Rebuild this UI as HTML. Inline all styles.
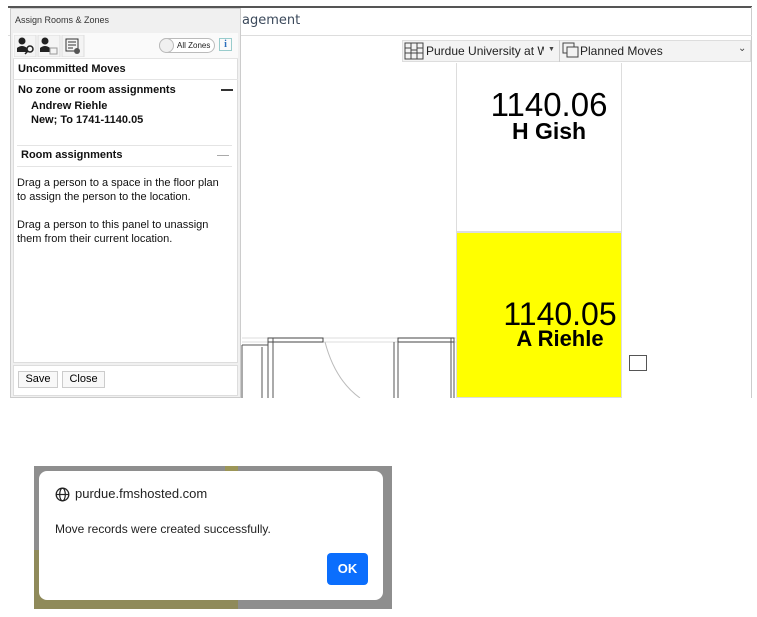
<!DOCTYPE html>
<html><head><style>
body{margin:0;width:757px;height:617px;background:#fff;position:relative;font-family:"Liberation Sans",sans-serif;overflow:hidden}
.a{position:absolute}
</style></head><body>
<div class="a" style="left:8px;top:6px;width:744px;height:2px;background:#555"></div>
<div class="a" style="left:751px;top:7px;width:1px;height:391px;background:#ccc"></div>
<div class="a" style="left:8px;top:35px;width:744px;height:1px;background:#ddd"></div>
<div class="a" style="left:242px;top:13px;font-size:13px;color:#3c4a5c;font-family:'DejaVu Sans',sans-serif">agement</div>
<div class="a" style="left:402px;top:40px;width:349px;height:22px;background:#f3f3f3;border:1px solid #ddd;box-sizing:border-box"></div>
<svg class="a" style="left:404px;top:42px" width="20" height="18"><rect x="1" y="1" width="18" height="16" fill="none" stroke="#444"/><path d="M7 1v16M13 1v16M1 6h6M13 6h6M1 11h18M7 8h6" stroke="#444" fill="none"/></svg>
<div class="a" style="left:426px;top:44px;font-size:12px;color:#222;width:118px;overflow:hidden;white-space:nowrap">Purdue University at West</div>
<div class="a" style="left:548px;top:46px;font-size:7px;color:#444">▼</div>
<div class="a" style="left:559px;top:40px;width:1px;height:22px;background:#ccc"></div>
<svg class="a" style="left:562px;top:42px" width="18" height="18"><rect x="1" y="1" width="11" height="10" fill="none" stroke="#444"/><rect x="5" y="5" width="11" height="10" fill="#f3f3f3" stroke="#444"/></svg>
<div class="a" style="left:580px;top:44px;font-size:12px;color:#222">Planned Moves</div>
<div class="a" style="left:738px;top:43px;font-size:10px;color:#444">⌄</div>
<div class="a" style="left:456px;top:63px;width:166px;height:169px;border:1px solid #ddd;border-top:none;box-sizing:border-box;background:#fff"></div>
<div class="a" style="left:466px;top:88px;width:166px;text-align:center;font-size:33px;line-height:34px;color:#000">1140.06</div>
<div class="a" style="left:456px;top:118px;width:186px;text-align:center;font-size:23px;line-height:26px;color:#000;font-weight:bold">H Gish</div>
<div class="a" style="left:456px;top:232px;width:166px;height:166px;background:#ffff00;border:1px solid #ddd;box-sizing:border-box"></div>
<div class="a" style="left:498px;top:297px;width:124px;text-align:center;font-size:32px;line-height:34px">1140.05</div>
<div class="a" style="left:498px;top:327px;width:124px;text-align:center;font-size:22px;line-height:24px;font-weight:bold">A Riehle</div>
<div class="a" style="left:629px;top:355px;width:18px;height:16px;border:1px solid #555;box-sizing:border-box"></div>
<svg class="a" style="left:240px;top:335px" width="216" height="63"><path d="M2 3h214M2 7h214" stroke="#ddd" fill="none"/><path d="M28 3h55v4h-55zM158 3h56v4h-56z" stroke="#444" fill="none"/><path d="M28 3v60M33 3v60M211 3v60M214 3v60M154 7v56M158 7v56M2 10h26M2 10v53M22 12v51" stroke="#555" fill="none"/><path d="M85 7 Q95 45 120 63" stroke="#bbb" fill="none"/></svg>
<div class="a" style="left:10px;top:8px;width:231px;height:390px;background:#f0f0f0;border:1px solid #ccc;box-sizing:border-box"></div>
<div class="a" style="left:15px;top:15px;font-size:9px;color:#333">Assign Rooms &amp; Zones</div>
<div class="a" style="left:13px;top:33px;width:225px;height:330px;background:#fff;border:1px solid #ddd;box-sizing:border-box"></div>
<div class="a" style="left:13px;top:33px;width:225px;height:25px;background:#fafafa;border-bottom:1px solid #e4e4e4"></div>
<svg class="a" style="left:14px;top:35px" width="72" height="22"><rect x="0" y="0" width="22" height="22" fill="#f4f4f4" stroke="#ddd"/><rect x="24" y="0" width="22" height="22" fill="#f4f4f4" stroke="#ddd"/><rect x="48" y="0" width="22" height="22" fill="#f4f4f4" stroke="#ddd"/><circle cx="8" cy="6" r="3.5" fill="#222"/><path d="M3 17v-4q5-4 10 0v4z" fill="#222"/><circle cx="16" cy="14" r="3" fill="none" stroke="#222" stroke-width="1.5"/><path d="M14 16l-3 3" stroke="#222" stroke-width="1.5"/><circle cx="31" cy="6" r="3.5" fill="#222"/><path d="M26 17v-4q5-4 10 0v4z" fill="#222"/><rect x="36" y="13" width="7" height="6" fill="none" stroke="#999"/><rect x="52" y="4" width="12" height="12" fill="none" stroke="#333"/><path d="M54 7h8M54 10h8M54 13h5" stroke="#333"/><circle cx="63" cy="16" r="3" fill="#555"/></svg>
<div class="a" style="left:159px;top:38px;width:56px;height:15px;border:1px solid #bbb;border-radius:8px;background:#fff;box-sizing:border-box"></div>
<div class="a" style="left:159px;top:38px;width:15px;height:15px;border:1px solid #bbb;border-radius:50%;background:#f0f0f0;box-sizing:border-box"></div>
<div class="a" style="left:177px;top:41px;font-size:8px;color:#222">All Zones</div>
<div class="a" style="left:219px;top:38px;width:13px;height:13px;border:1px solid #9cc;box-sizing:border-box;font-size:10px;color:#2a6ebb;text-align:center;line-height:12px;font-family:'Liberation Serif',serif;font-weight:bold">i</div>
<div class="a" style="left:18px;top:63px;font-size:11px;font-weight:bold;color:#111">Uncommitted Moves</div>
<div class="a" style="left:13px;top:79px;width:225px;height:1px;background:#e4e4e4"></div>
<div class="a" style="left:18px;top:84px;font-size:11px;font-weight:bold;color:#111">No zone or room assignments</div>
<div class="a" style="left:221px;top:89px;width:12px;height:1.5px;background:#333"></div>
<div class="a" style="left:31px;top:99px;font-size:11px;font-weight:bold;color:#111;line-height:14px">Andrew Riehle<br>New; To 1741-1140.05</div>
<div class="a" style="left:17px;top:145px;width:215px;height:1px;background:#e4e4e4"></div>
<div class="a" style="left:21px;top:149px;font-size:11px;font-weight:bold;color:#111">Room assignments</div>
<div class="a" style="left:217px;top:155px;width:12px;height:1px;background:#aaa"></div>
<div class="a" style="left:17px;top:166px;width:215px;height:1px;background:#e4e4e4"></div>
<div class="a" style="left:17px;top:176px;font-size:11px;color:#111;line-height:14px;width:206px">Drag a person to a space in the floor plan to assign the person to the location.<br><br>Drag a person to this panel to unassign them from their current location.</div>
<div class="a" style="left:13px;top:365px;width:225px;height:31px;background:#fff;border:1px solid #ddd;box-sizing:border-box"></div>
<div class="a" style="left:18px;top:371px;width:40px;height:17px;border:1px solid #ccc;background:#f8f8f8;box-sizing:border-box;font-size:11px;text-align:center;line-height:15px">Save</div>
<div class="a" style="left:62px;top:371px;width:43px;height:17px;border:1px solid #ccc;background:#f8f8f8;box-sizing:border-box;font-size:11px;text-align:center;line-height:15px">Close</div>
<div class="a" style="left:34px;top:466px;width:358px;height:143px;background:#8e8e8e"></div>
<div class="a" style="left:34px;top:550px;width:204px;height:59px;background:#8f8a5a"></div>
<div class="a" style="left:225px;top:466px;width:13px;height:8px;background:#9c9658"></div>
<div class="a" style="left:39px;top:471px;width:344px;height:129px;background:#fff;border-radius:8px"></div>
<svg class="a" style="left:55px;top:487px" width="15" height="15"><circle cx="7.5" cy="7.5" r="6.3" fill="none" stroke="#222" stroke-width="1.3"/><ellipse cx="7.5" cy="7.5" rx="2.8" ry="6.3" fill="none" stroke="#222" stroke-width="1.2"/><path d="M1.2 7.5h12.6" stroke="#222" stroke-width="1.2"/></svg>
<div class="a" style="left:75px;top:486px;font-size:13px;color:#222">purdue.fmshosted.com</div>
<div class="a" style="left:55px;top:522px;font-size:12px;color:#222">Move records were created successfully.</div>
<div class="a" style="left:327px;top:553px;width:41px;height:32px;background:#0b6efd;border-radius:4px;color:#fff;font-size:13px;font-weight:bold;text-align:center;line-height:32px">OK</div>
</body></html>
